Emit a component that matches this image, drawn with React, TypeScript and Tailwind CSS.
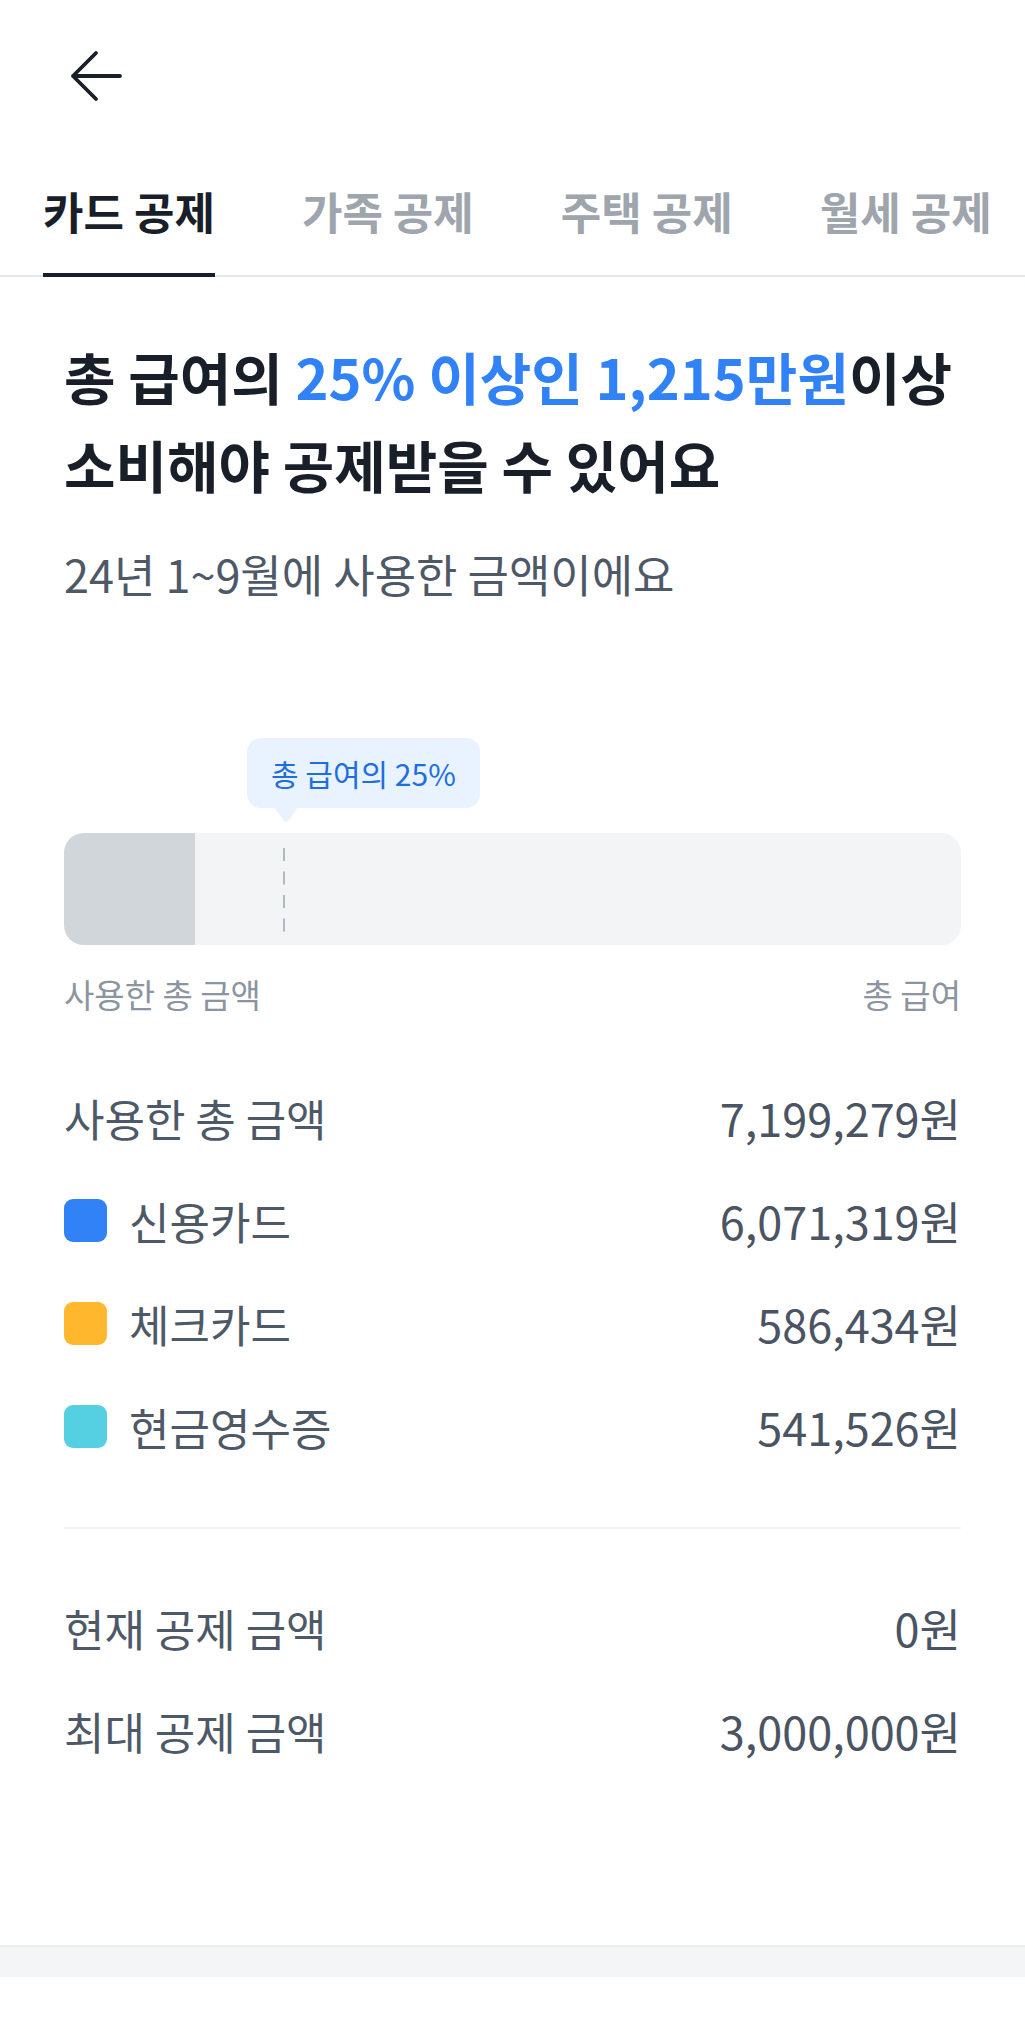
import { useState } from "react";

const tabs = ["카드 공제", "가족 공제", "주택 공제", "월세 공제"];

const usage = [
  { label: "신용카드", value: "6,071,319원", color: "bg-[#3182f6]" },
  { label: "체크카드", value: "586,434원", color: "bg-[#ffb82e]" },
  { label: "현금영수증", value: "541,526원", color: "bg-[#55d0e3]" },
];

function BackArrow() {
  return (
    <svg width="52" height="52" viewBox="0 0 52 52" fill="none">
      <path
        d="M26 3 L3 26 L26 49 M3 26 H50"
        stroke="#191f28"
        strokeWidth="3.8"
        strokeLinecap="round"
        strokeLinejoin="round"
      />
    </svg>
  );
}

function Row({ label, value, children }: { label: string; value: string; children?: React.ReactNode }) {
  return (
    <div className="flex h-[103px] items-center justify-between">
      <div className="flex items-center gap-[22px]">
        {children}
        <span className="text-[44px] leading-none text-[#4e5968]">{label}</span>
      </div>
      <span className="text-[45px] leading-none text-[#4a5462]">{value}</span>
    </div>
  );
}

export default function App() {
  const [active, setActive] = useState(0);

  return (
    <div className="min-h-[2041px] w-full bg-white font-['Noto_Sans_CJK_KR','Noto_Sans',sans-serif]">
      {/* Header */}
      <header className="flex h-[152px] items-center pl-[70px]">
        <button className="flex items-center">
          <BackArrow />
        </button>
      </header>

      {/* Tabs */}
      <nav className="flex gap-[87px] border-b-2 border-[#e5e8eb] px-[43px]">
        {tabs.map((t, i) => (
          <button key={t} onClick={() => setActive(i)} className="flex flex-col pt-[31px]">
            <span
              className={`whitespace-nowrap text-[44px] font-bold leading-[56px] ${
                i === active ? "text-[#191f28]" : "text-[#9ea5ad]"
              }`}
            >
              {t}
            </span>
            <span
              className={`-mb-[2px] mt-[34px] h-[4px] w-full ${i === active ? "bg-[#191f28]" : "bg-transparent"}`}
            />
          </button>
        ))}
      </nav>

      <main className="px-[64px]">
        {/* Title */}
        <h1 className="mt-[55px] text-[56px] font-bold leading-[88px] text-[#191f28]">
          총 급여의 <span className="text-[#3182f6]">25% 이상인 1,215만원</span>이상
          <br />
          소비해야 공제받을 수 있어요
        </h1>
        <p className="mt-[38px] text-[45px] leading-[56px] text-[#4e5968]">24년 1~9월에 사용한 금액이에요</p>

        {/* Tooltip */}
        <div className="mt-[136px] pl-[183px]">
          <div className="relative inline-flex h-[70px] items-center rounded-[14px] bg-[#e8f3ff] px-[24px]">
            <span className="text-[30px] leading-none text-[#1f6ee0]">총 급여의 25%</span>
            <svg
              className="absolute left-[27px] top-[69px]"
              width="24"
              height="16"
              viewBox="0 0 24 16"
              fill="#e8f3ff"
            >
              <path d="M0 0 H24 L14 14 Q12 16 10 14 Z" />
            </svg>
          </div>
        </div>

        {/* Bar */}
        <div className="relative mt-[25px] h-[112px] overflow-hidden rounded-[20px] bg-[#f2f4f6]">
          <div className="h-full w-[131px] bg-[#d1d6db]" />
          <svg className="absolute left-[219px] top-[15px]" width="2" height="84" viewBox="0 0 2 84">
            <line x1="1" y1="0" x2="1" y2="84" stroke="#b0b8c1" strokeWidth="2" strokeDasharray="13 10.5" />
          </svg>
        </div>
        <div className="mt-[27px] flex justify-between text-[33px] leading-[44px] text-[#8b95a1]">
          <span>사용한 총 금액</span>
          <span>총 급여</span>
        </div>

        {/* Breakdown */}
        <div className="mt-[50px]">
          <Row label="사용한 총 금액" value="7,199,279원" />
          {usage.map((u) => (
            <Row key={u.label} label={u.label} value={u.value}>
              <span className={`h-[43px] w-[43px] rounded-[9px] ${u.color}`} />
            </Row>
          ))}
        </div>

        <div className="mt-[49px] h-[2px] bg-[#f2f4f6]" />

        <div className="mt-[47px]">
          <Row label="현재 공제 금액" value="0원" />
          <Row label="최대 공제 금액" value="3,000,000원" />
        </div>
      </main>

      <div className="mt-[163px] h-[32px] border-t-2 border-[#eceef0] bg-[#f4f5f7]" />
    </div>
  );
}
